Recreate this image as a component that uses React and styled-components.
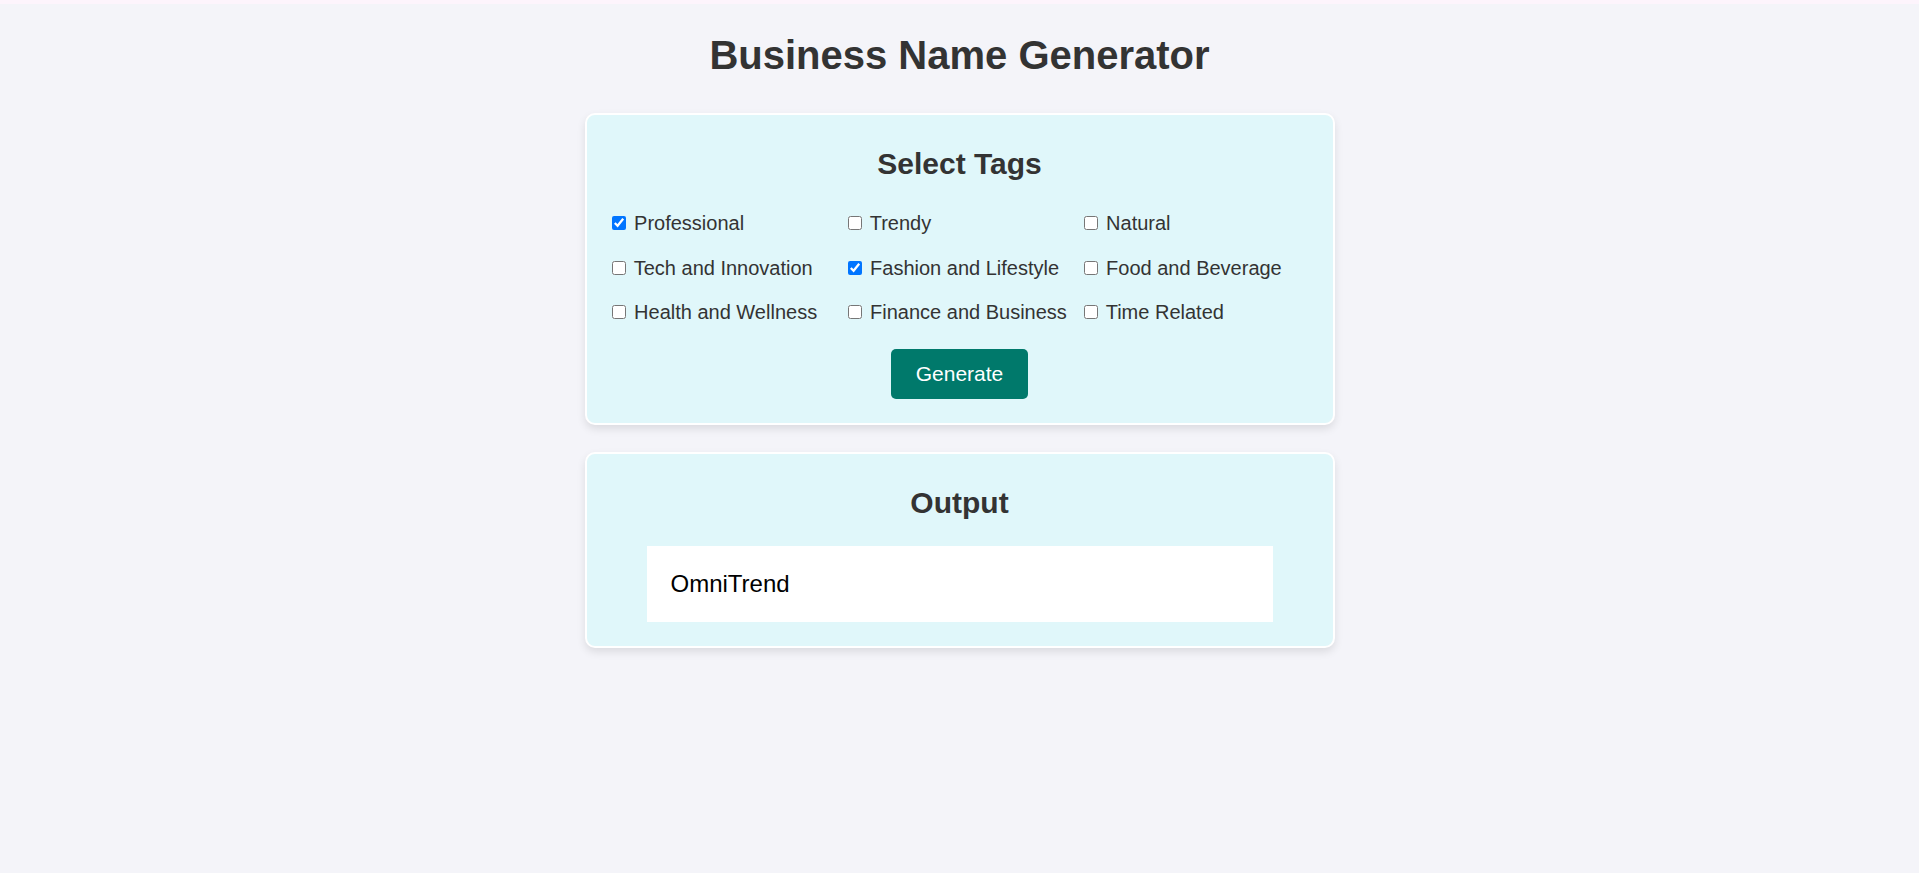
import React, { useState } from "react";
import styled, { createGlobalStyle } from "styled-components";

const GlobalStyle = createGlobalStyle`
  html, body {
    margin: 0;
    padding: 0;
    background: #f4f4f9;
  }
  body {
    font-family: "Liberation Sans", Arial, sans-serif;
    color: #333;
  }
`;

const TopStrip = styled.div`
  height: 4px;
  background: #fdf4fc;
`;

const Page = styled.main`
  display: flex;
  flex-direction: column;
  align-items: center;
  gap: 27px;
  padding: 28px 0 40px;
`;

const Title = styled.h1`
  margin: 1px 0 8px;
  font-size: 40px;
  font-weight: 700;
  color: #333;
  text-align: center;
`;

const Card = styled.section`
  box-sizing: border-box;
  width: 750px;
  background: #e0f7fa;
  border: 2px solid #ffffff;
  border-radius: 10px;
  box-shadow: 0 4px 8px rgba(0, 0, 0, 0.1);
  padding: 24px 19px;
  display: flex;
  flex-direction: column;
  align-items: stretch;
`;

const CardTitle = styled.h2`
  margin: 8px 0 26px;
  font-size: 30px;
  font-weight: 700;
  color: #333;
  text-align: center;
`;

const TagGrid = styled.div`
  display: grid;
  grid-template-columns: repeat(3, 1fr);
  row-gap: 21.7px;
  margin-top: 5px;
`;

const TagLabel = styled.label`
  font-size: 20px;
  color: #333;
  white-space: nowrap;
  cursor: pointer;
`;

const Checkbox = styled.input.attrs({ type: "checkbox" })`
  width: 14px;
  height: 14px;
  margin: 3px 3px 3px 6px;
  cursor: pointer;
`;

const GenerateButton = styled.button`
  align-self: center;
  margin-top: 25px;
  padding: 13px 25px;
  border: none;
  border-radius: 5px;
  background: #00796b;
  color: #ffffff;
  font-family: inherit;
  font-size: 21px;
  cursor: pointer;
`;

const OutputBox = styled.div`
  margin: 0 41px;
  padding: 24px;
  background: #ffffff;
  color: #000;
  font-size: 24px;
`;

const TAGS = [
  "Professional",
  "Trendy",
  "Natural",
  "Tech and Innovation",
  "Fashion and Lifestyle",
  "Food and Beverage",
  "Health and Wellness",
  "Finance and Business",
  "Time Related",
];

export default function App() {
  const [selected, setSelected] = useState({
    Professional: true,
    "Fashion and Lifestyle": true,
  });

  const toggle = (tag) =>
    setSelected((s) => ({ ...s, [tag]: !s[tag] }));

  return (
    <>
      <GlobalStyle />
      <TopStrip />
      <Page>
        <Title>Business Name Generator</Title>
        <Card>
          <CardTitle>Select Tags</CardTitle>
          <TagGrid>
            {TAGS.map((tag) => (
              <TagLabel key={tag}>
                <Checkbox checked={!!selected[tag]} onChange={() => toggle(tag)} /> {tag}
              </TagLabel>
            ))}
          </TagGrid>
          <GenerateButton>Generate</GenerateButton>
        </Card>
        <Card>
          <CardTitle>Output</CardTitle>
          <OutputBox>OmniTrend</OutputBox>
        </Card>
      </Page>
    </>
  );
}
